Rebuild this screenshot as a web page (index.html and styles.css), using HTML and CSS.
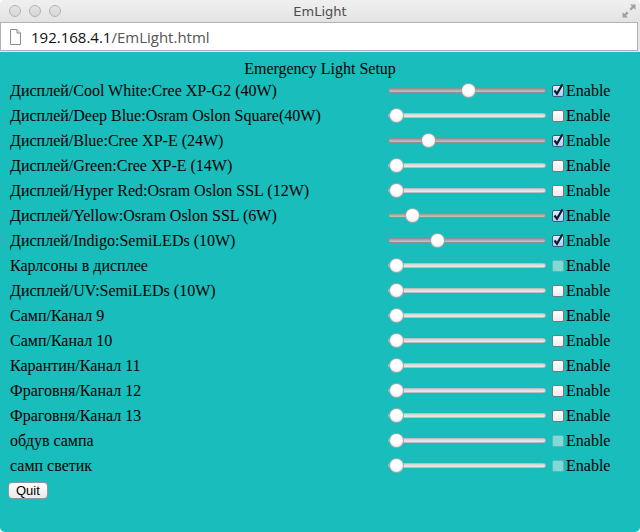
FILE: index.html
```html
<!DOCTYPE html>
<html>
<head>
<meta charset="utf-8">
<title>EmLight</title>
<link rel="stylesheet" href="styles.css">
</head>
<body>
<div class="window">
  <div class="titlebar">
    <div class="lights"><span class="light"></span><span class="light"></span><span class="light"></span></div>
    <div class="title">EmLight</div>
    <div class="tools">
      <svg class="resize" width="16" height="16" viewBox="0 0 16 16">
        <path d="M9 1.5h5.5V7L12.6 5.1 10.2 7.5 8.5 5.8l2.4-2.4z" fill="#a2a2a2"/>
        <path d="M7 14.5H1.5V9l1.9 1.9 2.4-2.4 1.7 1.7-2.4 2.4z" fill="#a2a2a2"/>
      </svg>
    </div>
  </div>
  <div class="urlbar">
    <svg class="doc" width="11" height="16" viewBox="0 0 11 16">
      <path d="M0.5 0.5h6.5l3.5 3.5v11.5h-10z" fill="#fdfdfd" stroke="#8c8c8c"/>
      <path d="M7 0.5v3.5h3.5" fill="#e8e8e8" stroke="#8c8c8c"/>
    </svg>
    <span class="host">192.168.4.1</span><span class="path">/EmLight.html</span>
  </div>
  <div class="content">
    <div class="heading">Emergency Light Setup</div>
    <div class="channels">
      <div class="row"><span class="label">Дисплей/Cool White:Cree XP-G2 (40W)</span><input class="slider on" type="range" min="0" max="100" value="51"><label class="enable"><span class="box checked"><svg viewBox="0 0 12 14" width="12" height="14"><path d="M2.5 7.5l2.5 3.2 5.5-9.5" fill="none" stroke="#141a2a" stroke-width="2.2"/></svg></span>Enable</label></div>
      <div class="row"><span class="label">Дисплей/Deep Blue:Osram Oslon Square(40W)</span><input class="slider" type="range" min="0" max="100" value="0"><label class="enable"><span class="box"></span>Enable</label></div>
      <div class="row"><span class="label">Дисплей/Blue:Cree XP-E (24W)</span><input class="slider on" type="range" min="0" max="100" value="23"><label class="enable"><span class="box checked"><svg viewBox="0 0 12 14" width="12" height="14"><path d="M2.5 7.5l2.5 3.2 5.5-9.5" fill="none" stroke="#141a2a" stroke-width="2.2"/></svg></span>Enable</label></div>
      <div class="row"><span class="label">Дисплей/Green:Cree XP-E (14W)</span><input class="slider" type="range" min="0" max="100" value="0"><label class="enable"><span class="box"></span>Enable</label></div>
      <div class="row"><span class="label">Дисплей/Hyper Red:Osram Oslon SSL (12W)</span><input class="slider" type="range" min="0" max="100" value="0"><label class="enable"><span class="box"></span>Enable</label></div>
      <div class="row"><span class="label">Дисплей/Yellow:Osram Oslon SSL (6W)</span><input class="slider on" type="range" min="0" max="100" value="11"><label class="enable"><span class="box checked"><svg viewBox="0 0 12 14" width="12" height="14"><path d="M2.5 7.5l2.5 3.2 5.5-9.5" fill="none" stroke="#141a2a" stroke-width="2.2"/></svg></span>Enable</label></div>
      <div class="row"><span class="label">Дисплей/Indigo:SemiLEDs (10W)</span><input class="slider on" type="range" min="0" max="100" value="29"><label class="enable"><span class="box checked"><svg viewBox="0 0 12 14" width="12" height="14"><path d="M2.5 7.5l2.5 3.2 5.5-9.5" fill="none" stroke="#141a2a" stroke-width="2.2"/></svg></span>Enable</label></div>
      <div class="row"><span class="label">Карлсоны в дисплее</span><input class="slider" type="range" min="0" max="100" value="0"><label class="enable"><span class="box disabled"></span>Enable</label></div>
      <div class="row"><span class="label">Дисплей/UV:SemiLEDs (10W)</span><input class="slider" type="range" min="0" max="100" value="0"><label class="enable"><span class="box"></span>Enable</label></div>
      <div class="row"><span class="label">Самп/Канал 9</span><input class="slider" type="range" min="0" max="100" value="0"><label class="enable"><span class="box"></span>Enable</label></div>
      <div class="row"><span class="label">Самп/Канал 10</span><input class="slider" type="range" min="0" max="100" value="0"><label class="enable"><span class="box"></span>Enable</label></div>
      <div class="row"><span class="label">Карантин/Канал 11</span><input class="slider" type="range" min="0" max="100" value="0"><label class="enable"><span class="box"></span>Enable</label></div>
      <div class="row"><span class="label">Фраговня/Канал 12</span><input class="slider" type="range" min="0" max="100" value="0"><label class="enable"><span class="box"></span>Enable</label></div>
      <div class="row"><span class="label">Фраговня/Канал 13</span><input class="slider" type="range" min="0" max="100" value="0"><label class="enable"><span class="box"></span>Enable</label></div>
      <div class="row"><span class="label">обдув сампа</span><input class="slider" type="range" min="0" max="100" value="0"><label class="enable"><span class="box disabled"></span>Enable</label></div>
      <div class="row"><span class="label">самп светик</span><input class="slider" type="range" min="0" max="100" value="0"><label class="enable"><span class="box disabled"></span>Enable</label></div>
    </div>
    <button class="quit">Quit</button>
  </div>
</div>
</body>
</html>
```

FILE: styles.css
```css
html, body {
  margin: 0;
  padding: 0;
  background: #ffffff;
}

.window {
  width: 640px;
  height: 532px;
  display: flex;
  flex-direction: column;
  border-radius: 5px;
  overflow: hidden;
  background: #e6e6e6;
}

.titlebar {
  height: 22px;
  display: grid;
  grid-template-columns: 1fr auto 1fr;
  align-items: center;
  background: linear-gradient(#f0f0f0, #e3e3e3);
}

.lights {
  display: flex;
  gap: 8px;
  padding-left: 9px;
}

.light {
  width: 12px;
  height: 12px;
  box-sizing: border-box;
  border-radius: 50%;
  border: 1px solid #b3b3b3;
  background: linear-gradient(#e4e4e4, #d6d6d6);
}

.title {
  font-family: "DejaVu Sans", sans-serif;
  font-size: 13px;
  color: #4d4d4d;
  padding-top: 1px;
}

.tools {
  display: flex;
  justify-content: flex-end;
  padding-right: 3px;
}

.resize {
  display: block;
}

.urlbar {
  height: 29px;
  box-sizing: border-box;
  margin-right: 2px;
  border: 1px solid #aeb3bb;
  background: #ffffff;
  display: flex;
  align-items: center;
  padding-left: 9px;
  font-family: "Open Sans", sans-serif;
  font-size: 15px;
}

.doc {
  margin-right: 10px;
  margin-top: 1px;
}

.host {
  color: #111111;
}

.path {
  color: #555555;
}

.content {
  flex: 1;
  margin-top: 1px;
  background: #19bdbb;
  padding: 8px 0 0 10px;
  font-family: "Liberation Serif", serif;
  font-size: 16px;
  color: #000000;
}

.heading {
  height: 18px;
  line-height: 18px;
  text-align: center;
  padding-right: 10px;
}

.channels {
  display: grid;
  grid-template-columns: 378px 158px auto;
  grid-auto-rows: 25px;
  align-items: center;
}

.row {
  display: contents;
}

.label {
  white-space: nowrap;
  line-height: 18px;
}

.slider {
  -webkit-appearance: none;
  appearance: none;
  width: 158px;
  height: 16px;
  margin: 0;
  padding: 0;
  background: transparent;
}

.slider::-webkit-slider-runnable-track {
  height: 5px;
  box-sizing: border-box;
  border-radius: 3px;
  border: 1px solid #bdbdbd;
  background: linear-gradient(#d2d2d2, #ececec);
}

.slider.on::-webkit-slider-runnable-track {
  border-color: #8f8f8f;
  background: linear-gradient(#9c9c9c, #c6c6c6);
}

.slider::-webkit-slider-thumb {
  -webkit-appearance: none;
  appearance: none;
  width: 15px;
  height: 15px;
  box-sizing: border-box;
  margin-top: -6px;
  border-radius: 50%;
  border: 1px solid #a6a6a6;
  background: radial-gradient(circle at 50% 35%, #ffffff 45%, #e0e0e0 100%);
}

.enable {
  display: flex;
  align-items: center;
  padding-left: 6px;
  line-height: 18px;
}

.box {
  position: relative;
  width: 12px;
  height: 12px;
  box-sizing: border-box;
  margin-right: 2px;
  border-radius: 2px;
  border: 1px solid #6f7e84;
  background: linear-gradient(#ffffff, #ececec);
}

.box.checked {
  border-color: #3f5c80;
  background: linear-gradient(#dcedfb, #a8d0f3);
}

.box.checked svg {
  position: absolute;
  left: -1px;
  top: -3px;
}

.box.disabled {
  border-color: #5cb8b6;
  background: #7fdad7;
}

.quit {
  display: block;
  margin: 4px 0 0 -2px;
  height: 17px;
  padding: 0 7px;
  font-family: "Liberation Sans", sans-serif;
  font-size: 13px;
  line-height: 15px;
  color: #000000;
  border: 1px solid #8e9a9a;
  border-radius: 4px;
  background: linear-gradient(#ffffff, #eaeaea);
}
```
